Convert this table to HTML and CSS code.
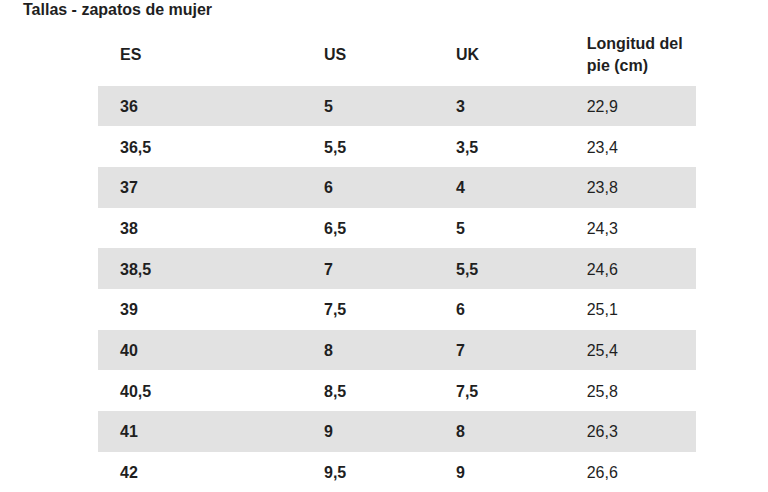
FILE: index.html
```html
<!DOCTYPE html>
<html lang="es">
<head>
<meta charset="utf-8">
<title>Tallas - zapatos de mujer</title>
<link rel="stylesheet" href="styles.css">
</head>
<body>
<h1 class="title">Tallas - zapatos de mujer</h1>
<table class="sizes">
  <colgroup>
    <col class="c1"><col class="c2"><col class="c3"><col class="c4">
  </colgroup>
  <thead>
    <tr><th>ES</th><th>US</th><th>UK</th><th>Longitud del<br>pie (cm)</th></tr>
  </thead>
  <tbody>
    <tr><td>36</td><td>5</td><td>3</td><td class="len">22,9</td></tr>
    <tr><td>36,5</td><td>5,5</td><td>3,5</td><td class="len">23,4</td></tr>
    <tr><td>37</td><td>6</td><td>4</td><td class="len">23,8</td></tr>
    <tr><td>38</td><td>6,5</td><td>5</td><td class="len">24,3</td></tr>
    <tr><td>38,5</td><td>7</td><td>5,5</td><td class="len">24,6</td></tr>
    <tr><td>39</td><td>7,5</td><td>6</td><td class="len">25,1</td></tr>
    <tr><td>40</td><td>8</td><td>7</td><td class="len">25,4</td></tr>
    <tr><td>40,5</td><td>8,5</td><td>7,5</td><td class="len">25,8</td></tr>
    <tr><td>41</td><td>9</td><td>8</td><td class="len">26,3</td></tr>
    <tr><td>42</td><td>9,5</td><td>9</td><td class="len">26,6</td></tr>
  </tbody>
</table>
</body>
</html>
```

FILE: styles.css
```css
html, body {
  margin: 0;
  padding: 0;
  background: #ffffff;
}

body {
  font-family: "Liberation Sans", Arial, sans-serif;
  color: #1f1f1f;
  font-size: 16px;
}

.title {
  margin: 0;
  padding: 1px 0 0 23px;
  font-size: 16px;
  font-weight: bold;
  line-height: 18px;
}

.sizes {
  margin: 4px 0 0 98px;
  width: 598px;
  border-collapse: collapse;
  table-layout: fixed;
}

.c1 { width: 204px; }
.c2 { width: 132px; }
.c3 { width: 130.67px; }
.c4 { width: 131.33px; }

.sizes th,
.sizes td {
  padding: 10.33px 0 8.33px 22px;
  line-height: 22px;
  text-align: left;
  vertical-align: middle;
  font-weight: bold;
}

.sizes td.len {
  font-weight: normal;
}

.sizes tbody tr:nth-child(odd) {
  background: #e2e2e2;
}
```
